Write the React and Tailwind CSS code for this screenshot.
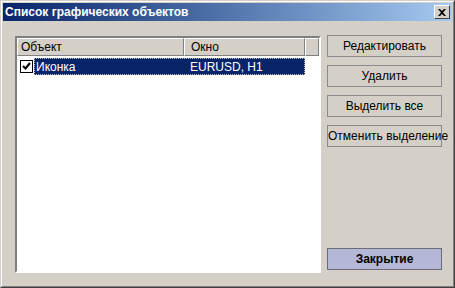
import React from 'react';

const font = { fontFamily: '"Liberation Sans", Arial, sans-serif' };

function Button({ children, primary }) {
  return (
    <button
      className={
        primary
          ? 'h-[22px] w-[115px] whitespace-nowrap border border-[#6b6b7a] bg-[#b4b8d6] text-[12px] font-bold text-black'
          : 'h-[22px] w-[115px] whitespace-nowrap border border-[#8a8a8a] bg-[#d4d0c8] text-[12px] text-black'
      }
    >
      {children}
    </button>
  );
}

export default function App() {
  return (
    <div style={font} className="h-[288px] w-[455px] border border-b-[#404040] border-l-[#d4d0c8] border-r-[#404040] border-t-[#d4d0c8] bg-[#d4d0c8]">
      <div className="flex h-full flex-col border border-b-[#808080] border-l-white border-r-[#808080] border-t-white">
        <div className="mx-[1px] mt-[1px] flex h-[18px] items-center justify-between bg-gradient-to-r from-[#0a246a] to-[#a6caf0] pl-[2px] pr-[2px]">
          <span className="text-[12px] font-bold text-white">Список графических объектов</span>
          <div className="flex h-[14px] w-[16px] items-center justify-center border border-b-[#404040] border-l-white border-r-[#404040] border-t-white bg-[#d4d0c8]">
            <svg width="8" height="7" viewBox="0 0 8 7">
              <path d="M0 0h2l2 2 2-2h2L5 3.5 8 7H6L4 5 2 7H0l3-3.5z" fill="#000" />
            </svg>
          </div>
        </div>

        <div className="flex flex-1 pl-[13px] pt-[14px]">
          <div className="mt-[1px] flex h-[237px] w-[306px] flex-col border-2 border-b-white border-l-[#808080] border-r-white border-t-[#808080] bg-white">
            <div className="flex h-[18px] text-[12px] text-black">
              <div className="flex w-[167px] items-center border border-b-[#808080] border-l-white border-r-[#808080] border-t-white bg-[#d4d0c8] pl-[3px]">
                Объект
              </div>
              <div className="flex w-[121px] items-center border border-b-[#808080] border-l-white border-r-[#808080] border-t-white bg-[#d4d0c8] pl-[6px]">
                Окно
              </div>
              <div className="flex-1 border border-b-[#808080] border-l-white border-r-[#808080] border-t-white bg-[#d4d0c8]" />
            </div>
            <div className="mt-[2px] flex h-[17px] items-center text-[12px]">
              <div className="ml-[3px] flex h-[13px] w-[13px] items-center justify-center border border-black bg-white">
                <svg width="9" height="9" viewBox="0 0 9 9">
                  <path d="M1 4l2.5 2.5L8 1" stroke="#000" strokeWidth="2" fill="none" />
                </svg>
              </div>
              <div className="ml-[1px] flex h-full w-[271px] items-center border border-dotted border-[#c0c0c0] bg-[#0a246a] text-white">
                <span className="w-[155px] pl-[1px]">Иконка</span>
                <span>EURUSD, H1</span>
              </div>
            </div>
          </div>

          <div className="ml-[6px] flex h-[237px] flex-col">
            <div className="flex flex-col gap-[8px]">
              <Button>Редактировать</Button>
              <Button>Удалить</Button>
              <Button>Выделить все</Button>
              <Button>Отменить выделение</Button>
            </div>
            <div className="mt-auto mb-[2px]">
              <Button primary>Закрытие</Button>
            </div>
          </div>
        </div>
      </div>
    </div>
  );
}
